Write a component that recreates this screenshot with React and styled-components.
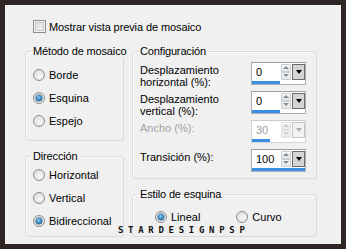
import React from "react";
import styled, { createGlobalStyle } from "styled-components";

const Global = createGlobalStyle`
  html, body {
    margin: 0;
    padding: 0;
    background: #302525;
  }
  body {
    font-family: "Liberation Sans", Arial, sans-serif;
    font-size: 11px;
    color: #000;
  }
`;

const Frame = styled.div`
  width: 346px;
  height: 249px;
  box-sizing: border-box;
  padding: 5px;
  background: #302525;
`;

const Panel = styled.div`
  position: relative;
  height: 100%;
  box-sizing: border-box;
  background: #f0f0f0;
  padding: 15px 0 0 20px;
  display: flex;
  flex-direction: column;
  gap: 12px;
`;

const CheckRow = styled.label`
  display: flex;
  align-items: center;
  gap: 3px;
  height: 13px;
  padding-left: 8px;
  letter-spacing: -0.1px;
`;

const CheckBox = styled.span`
  width: 13px;
  height: 13px;
  box-sizing: border-box;
  border: 1px solid #8e8f8f;
  background: linear-gradient(135deg, #dcdcdc, #f6f6f6);
  box-shadow: inset 0 0 0 1px #f4f4f4, inset 0 0 0 2px #c9c9c9;
`;

const Columns = styled.div`
  display: grid;
  grid-template-columns: 99px 185px;
  column-gap: 8px;
`;

const Column = styled.div`
  display: flex;
  flex-direction: column;
  gap: 9px;
`;

const Group = styled.fieldset`
  margin: 0;
  padding: 0;
  min-width: 0;
  height: ${(p) => p.$h}px;
  box-sizing: border-box;
  border: 1px solid #d5dbe0;
  border-radius: 3px;
  box-shadow: inset 1px 1px 0 #fafafa;
`;

const Legend = styled.legend`
  margin-left: 5px;
  padding: 0 2px;
  line-height: 13px;
  font-size: 11px;
  white-space: nowrap;
  letter-spacing: -0.15px;
`;

const Body = styled.div`
  display: flex;
  flex-direction: ${(p) => (p.$row ? "row" : "column")};
  gap: ${(p) => p.$gap || 0}px;
  padding: ${(p) => p.$pad};
`;

const RadioRow = styled.label`
  display: flex;
  align-items: center;
  gap: 4px;
  height: 23px;
`;

const Radio = styled.span`
  position: relative;
  width: 12px;
  height: 12px;
  box-sizing: border-box;
  border-radius: 50%;
  border: 1px solid #8d8e8f;
  background: radial-gradient(circle at 60% 60%, #f8f8f8, #d6d6d6);
  &::after {
    content: "";
    display: ${(p) => (p.$on ? "block" : "none")};
    position: absolute;
    left: 2px;
    top: 2px;
    width: 6px;
    height: 6px;
    border-radius: 50%;
    background: radial-gradient(circle at 45% 40%, #8fd6fb, #2a7db8 55%, #0d3e66);
    box-shadow: 0 0 0 0.5px #1e4f78;
  }
`;

const FieldRow = styled.div`
  display: flex;
  align-items: flex-start;
  height: 23px;
`;

const FieldLabel = styled.div`
  width: 111px;
  padding-top: 2px;
  line-height: 12px;
  color: ${(p) => (p.$off ? "#a3a3a3" : "#000")};
`;

const Control = styled.div`
  width: 55px;
  height: 23px;
  box-sizing: border-box;
  border: 1px solid ${(p) => (p.$off ? "#d2d4d8" : "#abadb3")};
  border-top-color: ${(p) => (p.$off ? "#c8cacd" : "#9a9ca3")};
  background: #fff;
  display: flex;
  flex-direction: column;
`;

const Top = styled.div`
  display: flex;
  align-items: center;
  height: 17px;
`;

const Value = styled.span`
  flex: 1;
  padding-left: 4px;
  color: ${(p) => (p.$off ? "#a0a0a0" : "#000")};
`;

const Spin = styled.div`
  display: flex;
  flex-direction: column;
  width: 10px;
  height: 16px;
  margin-right: 1px;
`;

const SpinHalf = styled.div`
  flex: 1;
  display: flex;
  align-items: center;
  justify-content: center;
  border: 1px solid ${(p) => (p.$off ? "#e0e0e0" : "#c9ccd0")};
  border-radius: 1px;
  background: linear-gradient(#f9f9f9, #e7e7e7);
  &::before {
    content: "";
    border-left: 3px solid transparent;
    border-right: 3px solid transparent;
    ${(p) => (p.$down ? "border-top" : "border-bottom")}: 3px solid
      ${(p) => (p.$off ? "#c8cdd2" : "#7f8c99")};
  }
`;

const Drop = styled.div`
  width: 13px;
  height: 16px;
  box-sizing: border-box;
  display: flex;
  align-items: center;
  justify-content: center;
  border: 1px solid ${(p) => (p.$off ? "#c4c4c4" : "#6b6b6b")};
  background: ${(p) => (p.$off ? "#f2f2f2" : "#d4d4d4")};
  &::before {
    content: "";
    border-left: 3.5px solid transparent;
    border-right: 3.5px solid transparent;
    border-top: 4px solid ${(p) => (p.$off ? "#b0b0b0" : "#000")};
  }
`;

const Bar = styled.div`
  height: 3px;
  margin-top: 1px;
  background: #3a8fe2;
`;

const Mark = styled.div`
  position: absolute;
  left: 113px;
  top: 220px;
  font-family: "DejaVu Sans Mono", "Liberation Mono", monospace;
  font-size: 9px;
  font-weight: bold;
  letter-spacing: 4.7px;
  color: #111;
`;

const RadioItem = ({ label, on }) => (
  <RadioRow>
    <Radio $on={on} />
    {label}
  </RadioRow>
);

const Field = ({ label, value, bar, off }) => (
  <FieldRow>
    <FieldLabel $off={off}>{label}</FieldLabel>
    <Control $off={off}>
      <Top>
        <Value $off={off}>{value}</Value>
        <Spin>
          <SpinHalf $off={off} />
          <SpinHalf $off={off} $down />
        </Spin>
        <Drop $off={off} />
      </Top>
      <Bar style={{ width: bar }} />
    </Control>
  </FieldRow>
);

export default function App() {
  return (
    <Frame>
      <Global />
      <Panel>
        <CheckRow>
          <CheckBox />
          Mostrar vista previa de mosaico
        </CheckRow>
        <Columns>
          <Column>
            <Group $h={96}>
              <Legend>Método de mosaico</Legend>
              <Body $pad="5px 0 0 7px">
                <RadioItem label="Borde" />
                <RadioItem label="Esquina" on />
                <RadioItem label="Espejo" />
              </Body>
            </Group>
            <Group $h={87}>
              <Legend>Dirección</Legend>
              <Body $pad="0 0 0 7px">
                <RadioItem label="Horizontal" />
                <RadioItem label="Vertical" />
                <RadioItem label="Bidireccional" on />
              </Body>
            </Group>
          </Column>
          <Column>
            <Group $h={134}>
              <Legend>Configuración</Legend>
              <Body $pad="4px 0 0 7px" $gap={6}>
                <Field
                  label={<>Desplazamiento<br />horizontal (%):</>}
                  value="0"
                  bar={28}
                />
                <Field
                  label={<>Desplazamiento<br />vertical (%):</>}
                  value="0"
                  bar={28}
                />
                <Field label="Ancho (%):" value="30" bar={18} off />
                <Field label="Transición (%):" value="100" bar={53} />
              </Body>
            </Group>
            <Group $h={49}>
              <Legend>Estilo de esquina</Legend>
              <Body $row $pad="4px 0 0 22px" $gap={36}>
                <RadioItem label="Lineal" on />
                <RadioItem label="Curvo" />
              </Body>
            </Group>
          </Column>
        </Columns>
        <Mark>STARDESIGNPSP</Mark>
      </Panel>
    </Frame>
  );
}
